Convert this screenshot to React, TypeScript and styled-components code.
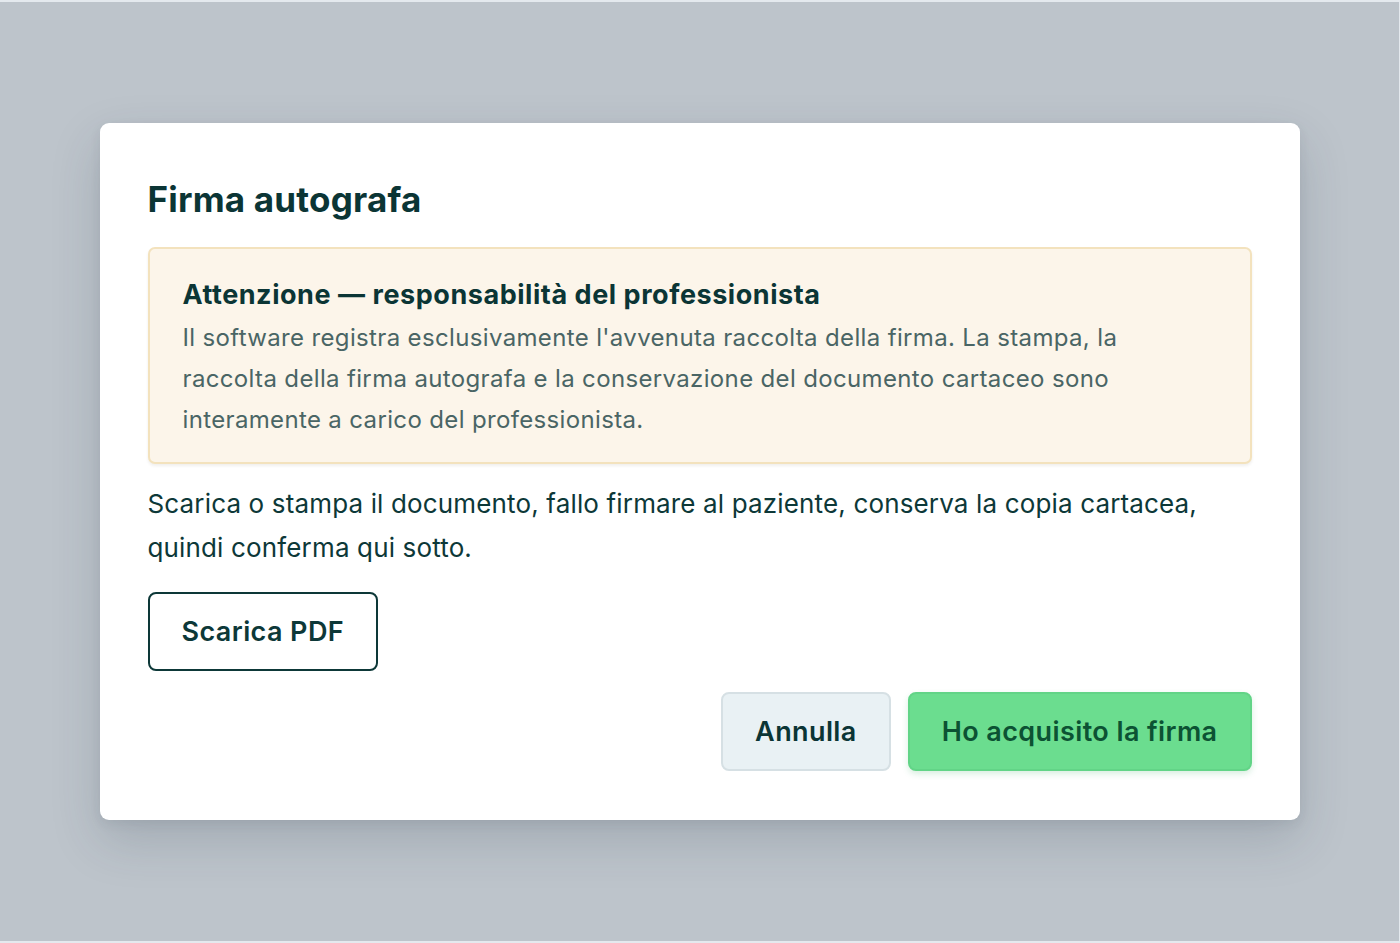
import styled, { createGlobalStyle } from 'styled-components';

const GlobalStyle = createGlobalStyle`
    * {
        box-sizing: border-box;
    }
    html, body {
        margin: 0;
        padding: 0;
        height: 100%;
    }
    body {
        background-color: #bdc4cb;
        font-family: Inter, 'Noto Sans', sans-serif;
        color: #0d3838;
    }
`;

const App = () => {
    return (
        <>
            <GlobalStyle />
            <Overlay>
                <Dialog role="dialog" aria-labelledby="firma-title">
                    <Title id="firma-title">Firma autografa</Title>
                    <Notice>
                        <NoticeTitle>Attenzione — responsabilità del professionista</NoticeTitle>
                        <NoticeText>
                            Il software registra esclusivamente l'avvenuta raccolta della firma. La stampa, la
                            raccolta della firma autografa e la conservazione del documento cartaceo sono
                            interamente a carico del professionista.
                        </NoticeText>
                    </Notice>
                    <Lead>
                        Scarica o stampa il documento, fallo firmare al paziente, conserva la copia cartacea,
                        quindi conferma qui sotto.
                    </Lead>
                    <div>
                        <Button $variant="outline">Scarica PDF</Button>
                    </div>
                    <Footer>
                        <Button $variant="secondary">Annulla</Button>
                        <Button $variant="primary">Ho acquisito la firma</Button>
                    </Footer>
                </Dialog>
            </Overlay>
        </>
    );
};

export default App;

const Overlay = styled.div`
    min-height: 100vh;
    display: flex;
    align-items: center;
    justify-content: center;
    border-top: 2px solid #e4e9ee;
    border-bottom: 2px solid #e4e9ee;
    border-right: 1px solid #e4e9ee;
`;

const Dialog = styled.div`
    width: 1200px;
    background-color: #ffffff;
    border-radius: 9px;
    padding: 48px 48px 49px 48px;
    box-shadow: 0 20px 50px rgba(40, 55, 70, 0.18), 0 4px 12px rgba(40, 55, 70, 0.08);
    display: flex;
    flex-direction: column;
`;

const Title = styled.h2`
    margin: 0 0 20px 0;
    font-size: 35px;
    line-height: 56px;
    font-weight: 700;
    letter-spacing: 0.2px;
    color: #0b3535;
`;

const Notice = styled.div`
    background-color: #fcf5ea;
    border: 2px solid #f3e2bd;
    border-radius: 7px;
    padding: 28px 32px 22px 33px;
    box-shadow: 0 2px 3px rgba(60, 50, 30, 0.08);
`;

const NoticeTitle = styled.div`
    font-size: 27px;
    line-height: 36px;
    font-weight: 700;
    letter-spacing: 0.55px;
    color: #0b3535;
    margin-bottom: 4px;
`;

const NoticeText = styled.p`
    margin: 0;
    font-size: 24px;
    line-height: 41px;
    letter-spacing: 0.35px;
    color: #4a6565;
`;

const Lead = styled.p`
    margin: 18px 0 22px 0;
    font-size: 26px;
    line-height: 44px;
    letter-spacing: 0.15px;
    color: #0d3838;
`;

const Footer = styled.div`
    display: flex;
    justify-content: flex-end;
    gap: 17px;
    margin-top: 21px;
`;

const Button = styled.button<{ $variant: 'outline' | 'secondary' | 'primary' }>`
    height: 79px;
    padding: 0 32px;
    border-radius: 8px;
    font-family: Inter, 'Noto Sans', sans-serif;
    font-size: 27px;
    font-weight: 600;
    letter-spacing: 0.4px;
    cursor: pointer;
    ${({ $variant }) =>
        $variant === 'outline'
            ? `
        background-color: #ffffff;
        border: 2px solid #0d3838;
        color: #0d3838;
    `
            : $variant === 'secondary'
            ? `
        background-color: #e9f1f4;
        border: 2px solid #d6e0e4;
        color: #0b3535;
    `
            : `
        background-color: #6bdd8f;
        border: 2px solid #62d487;
        color: #0c5233;
        box-shadow: 0 3px 6px rgba(60, 170, 100, 0.2);
    `}
`;
